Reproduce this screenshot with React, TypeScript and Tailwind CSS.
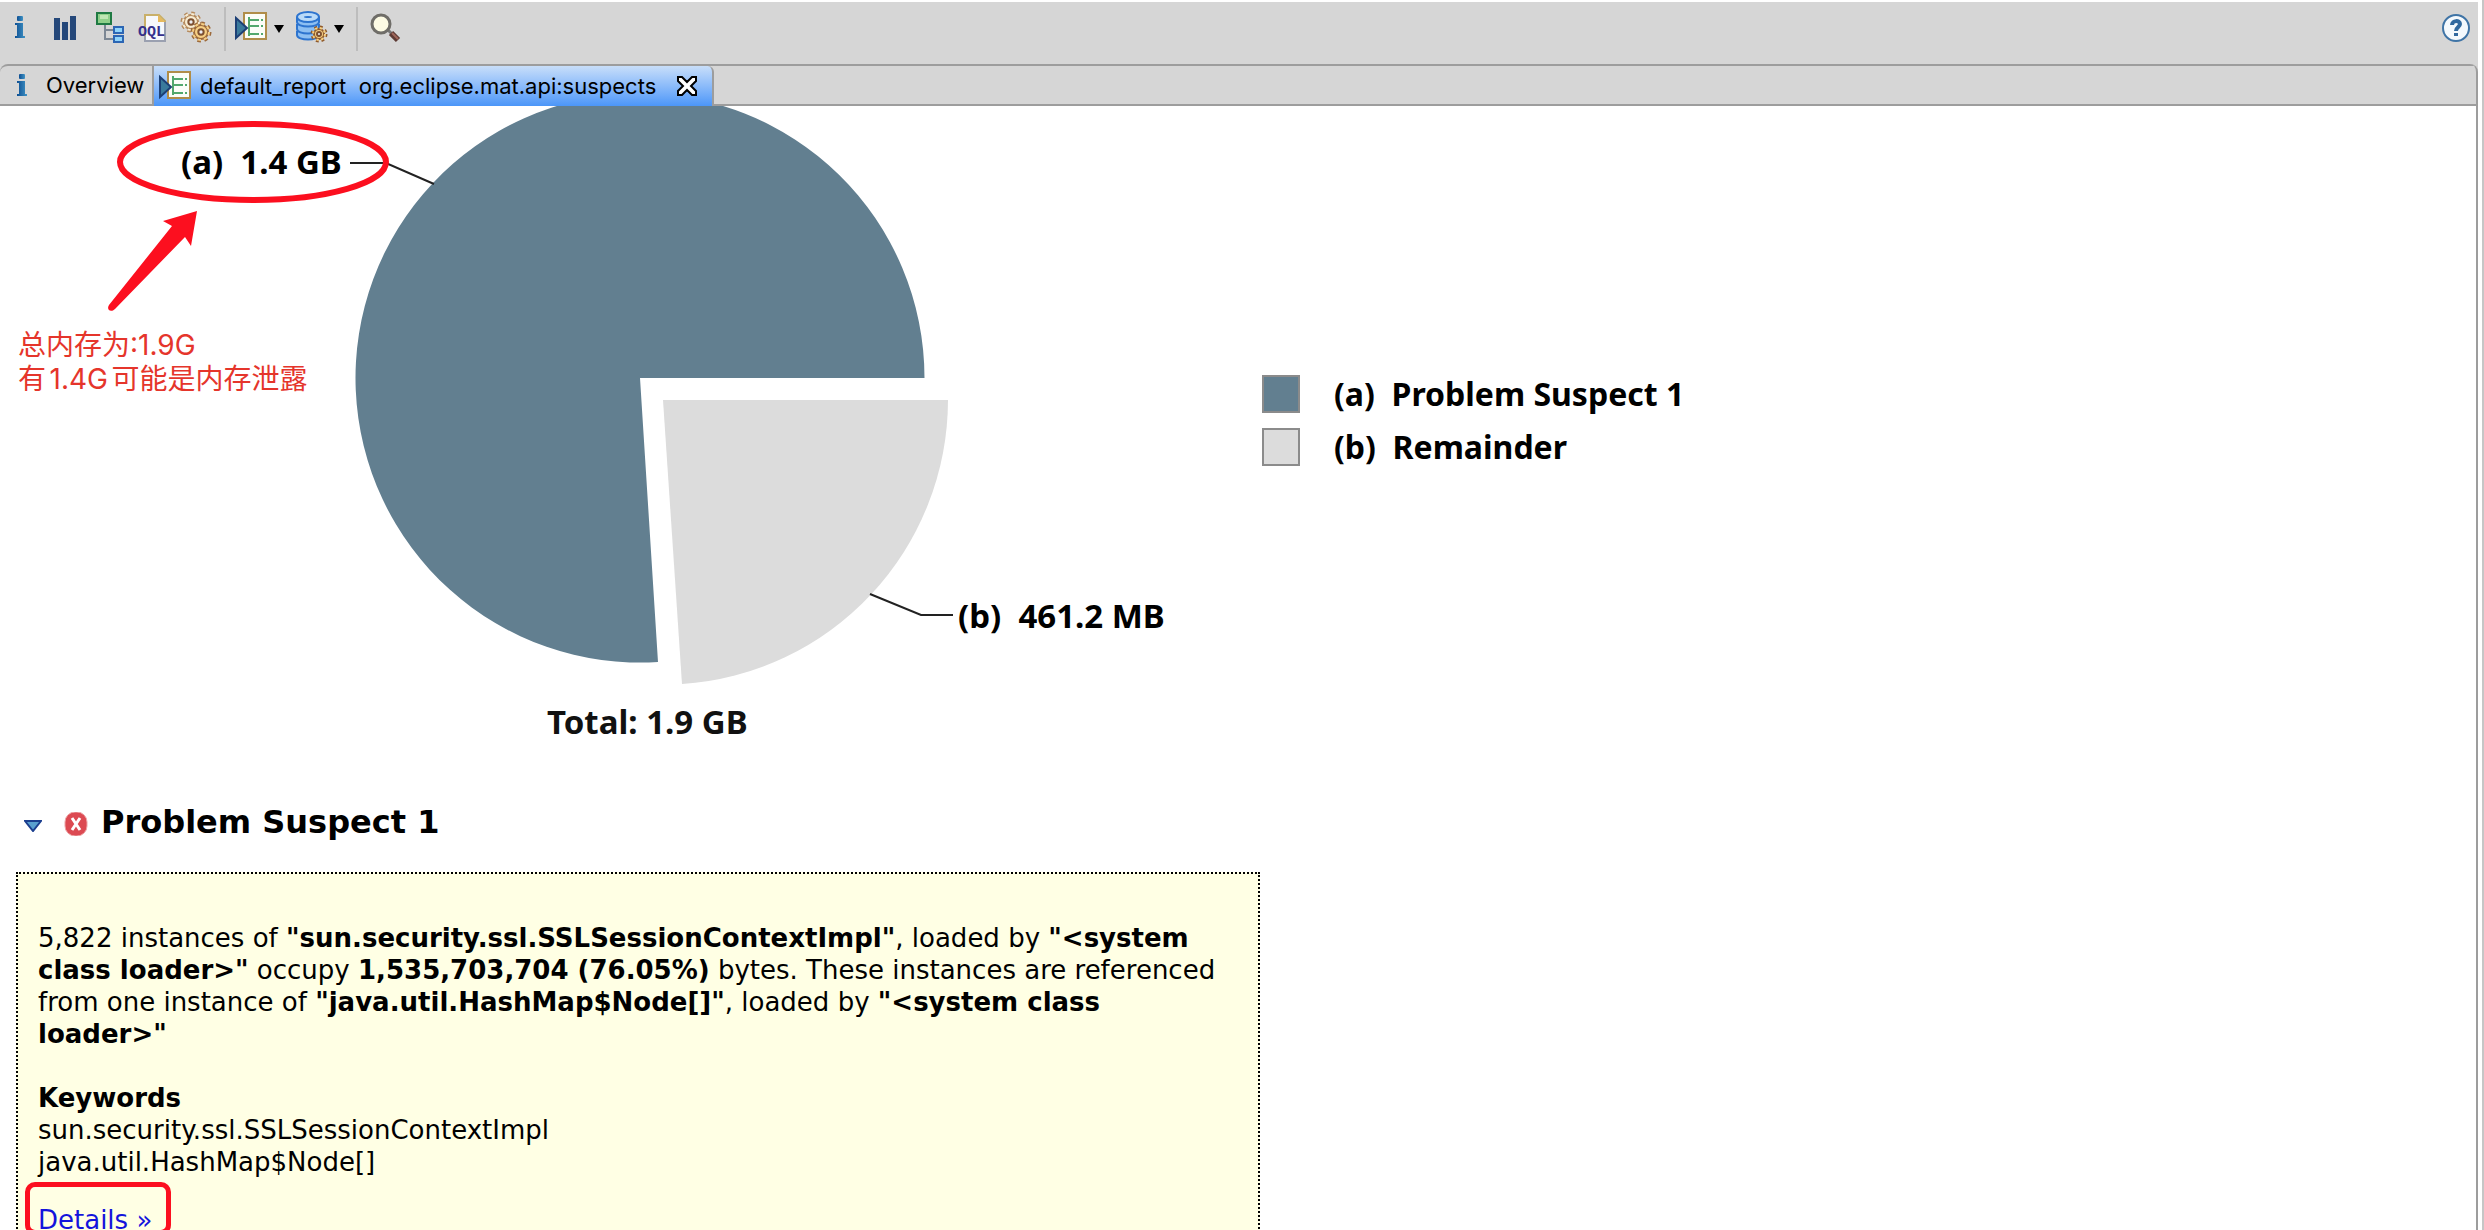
import type { ReactNode } from 'react';

const RED = '#fc0f1f';
const SLATE = '#627f90';

const keywords = ['sun.security.ssl.SSLSessionContextImpl', 'java.util.HashMap$Node[]'];

const legend = [
  { id: 'a', label: 'Problem Suspect 1', swatch: 'bg-[#627f90]' },
  { id: 'b', label: 'Remainder', swatch: 'bg-[#dcdcdc]' },
];

function InfoIcon() {
  return (
    <svg viewBox="0 0 32 32" className="size-8 shrink-0">
      <defs>
        <linearGradient id="info" x1="0" x2="1">
          <stop offset="0" stopColor="#0d4f93" />
          <stop offset="1" stopColor="#3f92c4" />
        </linearGradient>
      </defs>
      <rect x="13" y="5" width="6" height="5" rx="1" fill="url(#info)" />
      <path d="M11 12h8v13h2v2H11v-2h2V14h-2z" fill="url(#info)" />
    </svg>
  );
}

function HistogramIcon() {
  return (
    <svg viewBox="0 0 32 32" className="size-8" fill="#25487a">
      <rect x="6" y="7" width="6" height="22" />
      <rect x="14" y="11" width="6" height="18" />
      <rect x="22" y="5" width="6" height="24" />
    </svg>
  );
}

function TreeIcon() {
  return (
    <svg viewBox="0 0 32 32" className="size-8">
      <path d="M13 12v16h9M13 19h9" fill="none" stroke="#7c8794" strokeWidth="2" />
      <rect x="5" y="2" width="14" height="11" fill="#8fd08a" stroke="#1f7a43" strokeWidth="2" />
      <rect x="8" y="4" width="8" height="4" fill="#bfe6b4" />
      <rect x="22" y="16" width="9" height="6" fill="#8fd4fb" stroke="#2c66b4" strokeWidth="2" />
      <rect x="22" y="25" width="9" height="6" fill="#8fd4fb" stroke="#2c66b4" strokeWidth="2" />
    </svg>
  );
}

function OqlIcon() {
  return (
    <svg viewBox="0 0 32 32" className="size-8">
      <path d="M9 4h14l6 6v20H9z" fill="#f6f8fc" stroke="#c9b06a" strokeWidth="2" />
      <path d="M29 11v19H9v-5" fill="none" stroke="#9aa0b0" strokeWidth="2" />
      <path d="M22 4v7h7z" fill="#e7b95c" />
      <text x="2" y="25" fontFamily="Liberation Mono, monospace" fontSize="15" fontWeight="700" fill="#35308c">OQL</text>
    </svg>
  );
}

function Gear({ cx, cy, r, fill, edge }: { cx: number; cy: number; r: number; fill: string; edge: string }) {
  const tooth = (r * Math.PI) / 8;
  return (
    <g transform={`translate(${cx} ${cy})`}>
      <circle r={r} fill="none" stroke={edge} strokeWidth="5" strokeDasharray={`${tooth} ${tooth}`} />
      <circle r={r - 1} fill={fill} stroke={edge} strokeWidth="2" />
      <circle r={r} fill="none" stroke={fill} strokeWidth="2" strokeDasharray={`${tooth} ${tooth}`} />
      <circle r={r / 3} fill="#eef0f4" stroke="#7d5030" strokeWidth="2" />
    </g>
  );
}

function GearsIcon() {
  return (
    <svg viewBox="0 0 32 32" className="size-8">
      <Gear cx={11} cy={11} r={8} fill="#f7ecd2" edge="#b58a5e" />
      <Gear cx={21} cy={21} r={8} fill="#f6cf84" edge="#9c6a3c" />
    </svg>
  );
}

function ReportIcon() {
  return (
    <svg viewBox="0 0 34 32" className="h-8 w-[34px] shrink-0">
      <rect x="10" y="2" width="22" height="26" fill="#fbfdf8" stroke="#b08d49" strokeWidth="2" />
      <path d="M15 6v19M15 9h10M15 15h10M15 23h10" fill="none" stroke="#52a86d" strokeWidth="2" />
      <path d="M27 9h2M27 15h2M27 23h2" stroke="#52a86d" strokeWidth="2" />
      <path d="M2 7v20l11-10z" fill="#3a7a9c" stroke="#1d4076" strokeWidth="2" />
    </svg>
  );
}

function DatabaseIcon() {
  return (
    <svg viewBox="0 0 34 32" className="h-8 w-[34px]">
      <g fill="#8dbff2" stroke="#2d74cf" strokeWidth="2">
        <path d="M3 20v4c0 6 22 6 22 0v-4" />
        <path d="M3 13v5c0 6 22 6 22 0v-5" />
        <path d="M3 6v5c0 6 22 6 22 0V6" />
        <ellipse cx="14" cy="6" rx="11" ry="5" fill="#b9daf8" />
      </g>
      <ellipse cx="14" cy="6" rx="4" ry="1" fill="#2d74cf" />
      <Gear cx={25} cy={23} r={6} fill="#f6d083" edge="#8f5a2c" />
    </svg>
  );
}

function SearchIcon() {
  return (
    <svg viewBox="0 0 32 32" className="size-8">
      <path d="M18 19l4 4" stroke="#777" strokeWidth="3" />
      <path d="M21 22l7 7" stroke="#5d3a34" strokeWidth="6" />
      <path d="M22 22l6 6" stroke="#a0665a" strokeWidth="2" />
      <circle cx="11" cy="13" r="9" fill="#fdfbe4" stroke="#6f6d68" strokeWidth="3" />
    </svg>
  );
}

function HelpIcon() {
  return (
    <svg viewBox="0 0 32 32" className="size-8">
      <circle cx="16" cy="17" r="13" fill="#f4f9fd" stroke="#3f74a6" strokeWidth="2" />
      <path d="M12 14c0-5 8-5 8-1 0 3-4 3-4 7" fill="none" stroke="#31699f" strokeWidth="4" />
      <rect x="14" y="22" width="4" height="3" fill="#31699f" />
    </svg>
  );
}

function ErrorIcon() {
  return (
    <svg viewBox="0 0 24 24" className="size-6">
      <rect x="1" y="0" width="22" height="24" rx="10" fill="#dc4a52" stroke="#eda3a5" strokeWidth="1" />
      <path d="M8 6l8 12M16 6L8 18" stroke="#fff" strokeWidth="3" />
    </svg>
  );
}

function ToolButton({ label, children }: { label: string; children: ReactNode }) {
  return (
    <button type="button" aria-label={label} className="flex w-10 justify-center">
      {children}
    </button>
  );
}

function MenuButton({ label, children }: { label: string; children: ReactNode }) {
  return (
    <button type="button" aria-label={label} className="flex w-[50px] items-center justify-between">
      {children}
      <svg viewBox="0 0 10 8" className="mt-1 h-2 w-[10px]">
        <path d="M0 0h10L5 8z" />
      </svg>
    </button>
  );
}

function Toolbar() {
  return (
    <div className="flex h-[62px] items-start pt-[9px] pr-[6px]">
      <div className="flex gap-1">
        <ToolButton label="Overview"><InfoIcon /></ToolButton>
        <ToolButton label="Histogram"><HistogramIcon /></ToolButton>
        <ToolButton label="Dominator tree"><TreeIcon /></ToolButton>
        <ToolButton label="Object query"><OqlIcon /></ToolButton>
        <ToolButton label="Thread overview"><GearsIcon /></ToolButton>
      </div>
      <div className="-mt-1 mr-2 ml-2 h-11 w-[2px] bg-[#bdbdbd]" />
      <div className="flex gap-[10px]">
        <MenuButton label="Run report"><ReportIcon /></MenuButton>
        <MenuButton label="Query browser"><DatabaseIcon /></MenuButton>
      </div>
      <div className="-mt-1 mr-2 ml-3 h-11 w-[2px] bg-[#bdbdbd]" />
      <ToolButton label="Find object"><SearchIcon /></ToolButton>
      <button type="button" aria-label="Help" className="ml-auto"><HelpIcon /></button>
    </div>
  );
}

function Tabs() {
  return (
    <div role="tablist" className="flex h-[42px] rounded-tl-lg border-y-2 border-[#9d9d9d] font-[Inter,sans-serif] text-[22px] leading-[38px] text-black">
      <button type="button" role="tab" aria-selected="false" className="flex w-[154px] items-center gap-2 border-r-2 border-[#9d9d9d] pl-[6px]">
        <InfoIcon />
        Overview
      </button>
      <div role="tab" aria-selected="true" className="-mb-[2px] flex w-[560px] items-center rounded-tr-md border-r-2 border-[#9d9d9d] bg-linear-to-b from-[#c8def9] to-[#4b96f8] pl-1">
        <ReportIcon />
        <span className="ml-2 whitespace-pre">default_report  org.eclipse.mat.api:suspects</span>
        <button type="button" aria-label="Close tab" className="mr-[14px] ml-auto">
          <svg viewBox="0 0 22 22" className="size-[22px]">
            <path d="M2 2h4l5 5 5-5h4v4l-5 5 5 5v4h-4l-5-5-5 5H2v-4l5-5-5-5z" fill="#fff" stroke="#000" strokeWidth="2" />
          </svg>
        </button>
      </div>
    </div>
  );
}

function PieChart() {
  return (
    <svg viewBox="0 106 1240 654" className="h-[654px] w-[1240px] shrink-0" fontFamily="'Noto Sans', sans-serif" fontSize="33" fontWeight="700">
      <path d="M640 378H924.500A284.500 284.500 0 1 0 658 662z" fill={SLATE} />
      <path d="M663 400H948A285 285 0 0 1 682 684z" fill="#dcdcdc" />
      <path d="M350 163h36l48 21M870 594l51 21h32" fill="none" stroke="#222" strokeWidth="2" />
      <text x="181" y="174" xmlSpace="preserve">(a)  1.4 GB</text>
      <text x="958" y="628" xmlSpace="preserve">(b)  461.2 MB</text>
      <text x="547" y="734" fill="#111">Total: 1.9 GB</text>
      <ellipse cx="253" cy="162" rx="133" ry="38" fill="none" stroke={RED} strokeWidth="6" />
      <path d="M197 211l-34 10 9 5-63 79c-3 5 2 8 6 4l70-72 6 9z" fill={RED} />
    </svg>
  );
}

function Overview() {
  return (
    <div className="relative flex">
      <PieChart />
      <p className="absolute top-[222px] left-[18px] font-[Inter,'Noto_Sans_CJK_SC',sans-serif] text-[28px] leading-[34px] text-[#e5352b] [text-autospace:normal]">
        总内存为:1.9G
        <br />
        有1.4G可能是内存泄露
      </p>
      <ul className="mt-[261px] ml-[22px] font-['Noto_Sans',sans-serif] text-[32px] leading-[53px] font-bold">
        {legend.map(item => (
          <li key={item.id} className="flex items-center">
            <span className={`size-[38px] border-2 border-[#8b8b8b] ${item.swatch}`} />
            <span className="ml-[34px] whitespace-pre">{`(${item.id})  ${item.label}`}</span>
          </li>
        ))}
      </ul>
    </div>
  );
}

function Suspect() {
  return (
    <section className="pl-4 font-['DejaVu_Sans',sans-serif] text-[26px] leading-8">
      <h2 className="flex h-[112px] items-start pt-[42px] text-[32px] leading-10 font-bold">
        <button type="button" aria-label="Collapse section" className="mt-[18px] ml-2">
          <svg viewBox="0 0 18 12" className="h-3 w-[18px]">
            <path d="M1 1h16L9 11z" fill="#5aa0cf" stroke="#1c3f8f" strokeWidth="2" />
          </svg>
        </button>
        <span className="mt-[10px] mr-[13px] ml-[22px]"><ErrorIcon /></span>
        Problem Suspect 1
      </h2>
      <div className="h-[420px] w-[1244px] border-2 border-dotted border-black bg-[#ffffe4] pt-[48px] pr-7 pl-5">
        <p>
          5,822 instances of <b>"sun.security.ssl.SSLSessionContextImpl"</b>, loaded by <b>"&lt;system class loader&gt;"</b> occupy{' '}
          <b>1,535,703,704 (76.05%)</b> bytes. These instances are referenced from one instance of{' '}
          <b>"java.util.HashMap$Node[]"</b>, loaded by <b>"&lt;system class loader&gt;"</b>
        </p>
        <h3 className="mt-8 font-bold">Keywords</h3>
        <ul>
          {keywords.map(word => <li key={word}>{word}</li>)}
        </ul>
        <div className="relative mt-[26px]">
          <a href="#details" className="text-[#1414dc]">Details »</a>
          <span className="absolute -top-[22px] -left-[13px] h-[53px] w-[146px] rounded-[10px] border-[5px] border-[#fc0f1f]" />
        </div>
      </div>
    </section>
  );
}

export default function App() {
  return (
    <div className="flex h-screen overflow-hidden border-r-2 border-[#c6c6c6] bg-white pt-[2px] pr-1 text-black">
      <div className="flex min-w-0 flex-1 flex-col">
        <div className="bg-[#d6d6d6]">
          <Toolbar />
          <div className="overflow-hidden rounded-tr-lg border-r-2 border-[#9d9d9d]">
            <Tabs />
          </div>
        </div>
        <main className="min-h-0 flex-1 overflow-hidden border-r-2 border-[#9d9d9d]">
          <Overview />
          <Suspect />
        </main>
      </div>
    </div>
  );
}
